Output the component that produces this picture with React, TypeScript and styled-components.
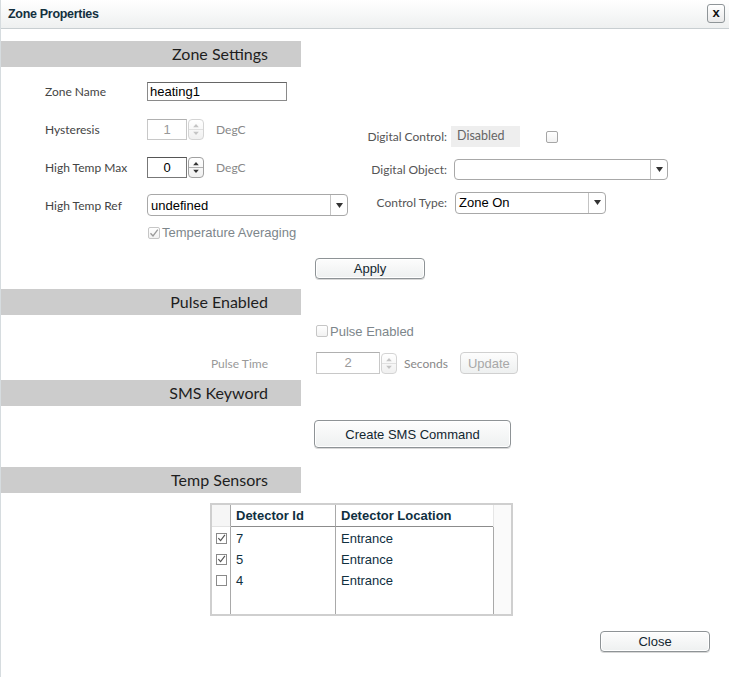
import React from 'react';
import styled, { createGlobalStyle } from "styled-components";

const GlobalStyle = createGlobalStyle`
    html, body {
        margin: 0;
        padding: 0;
        background: #ffffff;
    }
    * {
        box-sizing: border-box;
    }
`

const lato = `Lato, "Open Sans", sans-serif`
const arial = `"Liberation Sans", Arial, sans-serif`

type SensorType = {
    checked: boolean
    id: string
    location: string
}

const sensors: SensorType[] = [
    {checked: true, id: '7', location: 'Entrance'},
    {checked: true, id: '5', location: 'Entrance'},
    {checked: false, id: '4', location: 'Entrance'},
]

const CheckMark = (props: { color: string }) => (
    <svg width="10" height="10" viewBox="0 0 10 10">
        <path d="M1.5 5.2 L4 8 L8.8 1.6" fill="none" stroke={props.color} strokeWidth="1.3"/>
    </svg>
)

const Spin = (props: { disabled?: boolean }) => {
    const c = props.disabled ? '#c4c4c4' : '#333'
    return (
        <SpinBox disabled={props.disabled}>
            <svg width="100%" height="100%" viewBox="0 0 15 21" preserveAspectRatio="none">
                <path d="M4.5 8 L7.5 4.5 L10.5 8 Z" fill={c}/>
                <line x1="0" y1="10.5" x2="15" y2="10.5" stroke={props.disabled ? '#ddd' : '#aaa'} strokeWidth="1"/>
                <path d="M4.5 13 L7.5 16.5 L10.5 13 Z" fill={c}/>
            </svg>
        </SpinBox>
    )
}

const Select = (props: { width: number, height: number, value: string }) => (
    <SelectBox style={{width: props.width, height: props.height}}>
        <SelectValue>{props.value}</SelectValue>
        <SelectArrow>
            <svg width="7" height="5" viewBox="0 0 7 5">
                <path d="M0 0 L7 0 L3.5 5 Z" fill="#333"/>
            </svg>
        </SelectArrow>
    </SelectBox>
)

export default function App() {
    return (
        <>
            <GlobalStyle/>
            <Dialog>
                <TitleBar>
                    <Title>Zone Properties</Title>
                    <CloseX>x</CloseX>
                </TitleBar>

                <SectionHeader style={{marginTop: 12}}>Zone Settings</SectionHeader>
                <ZoneBody>
                    <FormColumns>
                        <LeftCol>
                            <LeftRow>
                                <Label>Zone Name</Label>
                                <TextInput>heating1</TextInput>
                            </LeftRow>
                            <LeftRow>
                                <Label>Hysteresis</Label>
                                <NumberInput disabled>1</NumberInput>
                                <Spin disabled/>
                                <Unit>DegC</Unit>
                            </LeftRow>
                            <LeftRow>
                                <Label>High Temp Max</Label>
                                <NumberInput>0</NumberInput>
                                <Spin/>
                                <Unit>DegC</Unit>
                            </LeftRow>
                            <LeftRow>
                                <Label>High Temp Ref</Label>
                                <Select width={201} height={22} value="undefined"/>
                            </LeftRow>
                            <CheckRow>
                                <CheckBox disabled><CheckMark color="#9a9a9a"/></CheckBox>
                                <CheckText disabled>Temperature Averaging</CheckText>
                            </CheckRow>
                        </LeftCol>
                        <RightCol>
                            <RightRow>
                                <RightLabel>Digital Control:</RightLabel>
                                <DisabledBox>Disabled</DisabledBox>
                                <CheckBox style={{marginLeft: 26}}/>
                            </RightRow>
                            <RightRow>
                                <RightLabel>Digital Object:</RightLabel>
                                <Spacer width={3}/>
                                <Select width={214} height={21} value=""/>
                            </RightRow>
                            <RightRow>
                                <RightLabel>Control Type:</RightLabel>
                                <Spacer width={4}/>
                                <Select width={151} height={22} value="Zone On"/>
                            </RightRow>
                        </RightCol>
                    </FormColumns>
                    <ButtonRow>
                        <Button width={110} height={21}>Apply</Button>
                    </ButtonRow>
                </ZoneBody>

                <SectionHeader>Pulse Enabled</SectionHeader>
                <PulseBody>
                    <PulseRow height={20}>
                        <span/>
                        <Inline>
                            <CheckBox disabled/>
                            <CheckText disabled>Pulse Enabled</CheckText>
                        </Inline>
                    </PulseRow>
                    <PulseRow height={24}>
                        <PulseLabel>Pulse Time</PulseLabel>
                        <Inline>
                            <NumberInput disabled wide>2</NumberInput>
                            <Spin disabled/>
                            <Unit style={{marginLeft: 7}}>Seconds</Unit>
                            <Button width={58} height={22} disabled style={{marginLeft: 12}}>Update</Button>
                        </Inline>
                    </PulseRow>
                </PulseBody>

                <SectionHeader>SMS Keyword</SectionHeader>
                <SmsBody>
                    <Button width={197} height={28}>Create SMS Command</Button>
                </SmsBody>

                <SectionHeader>Temp Sensors</SectionHeader>
                <SensorsBody>
                    <SensorTable>
                        <HeadCell first/>
                        <HeadCell>Detector Id</HeadCell>
                        <HeadCell>Detector Location</HeadCell>
                        <ScrollTrack/>
                        {sensors.map(s => (
                            <React.Fragment key={s.id}>
                                <Cell first>
                                    <TableCheck>{s.checked && <CheckMark color="#555"/>}</TableCheck>
                                </Cell>
                                <Cell>{s.id}</Cell>
                                <Cell>{s.location}</Cell>
                            </React.Fragment>
                        ))}
                        <FillerCell/>
                        <FillerCell/>
                        <FillerCell/>
                    </SensorTable>
                    <CloseRow>
                        <Button width={110} height={21}>Close</Button>
                    </CloseRow>
                </SensorsBody>
            </Dialog>
        </>
    );
}

const Dialog = styled.div`
    width: 729px;
    height: 677px;
    border-left: 1px solid #d6dcdf;
    background: #ffffff;
    overflow: hidden;
`
const TitleBar = styled.div`
    height: 29px;
    display: flex;
    align-items: center;
    justify-content: space-between;
    padding: 0 4px 0 7px;
    background: linear-gradient(#ffffff, #eef0f0);
    border-bottom: 1px solid #c8ced1;
`
const Title = styled.div`
    font-family: ${arial};
    font-weight: bold;
    font-size: 12.5px;
    color: #13303f;
    letter-spacing: -0.3px;
`
const CloseX = styled.div`
    width: 18px;
    height: 19px;
    margin-top: -2px;
    border: 1px solid #8f9598;
    border-radius: 3px;
    background: linear-gradient(#ffffff, #eaeaea);
    display: flex;
    align-items: center;
    justify-content: center;
    font-family: ${arial};
    font-weight: bold;
    font-size: 13px;
    line-height: 1;
    color: #111;
    padding-bottom: 2px;
`
const SectionHeader = styled.div`
    width: 300px;
    height: 26px;
    background: #cccccc;
    text-align: right;
    padding-right: 33px;
    font-family: ${lato};
    font-size: 16px;
    line-height: 26px;
    color: #1e1e1e;
`
const ZoneBody = styled.div`
    padding: 5px 0 10px;
`
const FormColumns = styled.div`
    display: flex;
    align-items: flex-start;
`
const LeftCol = styled.div`
    width: 359px;
    padding-left: 44px;
    display: flex;
    flex-direction: column;
`
const LeftRow = styled.div`
    height: 38px;
    display: flex;
    align-items: center;
`
const Label = styled.div`
    width: 102px;
    font-family: ${lato};
    font-size: 12px;
    color: #444;
`
const TextInput = styled.div`
    width: 140px;
    height: 19px;
    border: 1px solid #8a8a8a;
    border-top-color: #666;
    padding-left: 2px;
    font-family: ${arial};
    font-size: 13px;
    line-height: 17px;
    color: #000;
`
const NumberInput = styled.div<{ disabled?: boolean, wide?: boolean }>`
    width: ${props => props.wide ? 64 : 40}px;
    height: ${props => props.wide ? 22 : 21}px;
    border: 1px solid ${props => props.disabled ? '#c8c8c8' : '#777'};
    border-top-color: ${props => props.disabled ? '#b0b0b0' : '#555'};
    text-align: center;
    font-family: ${arial};
    font-size: 13px;
    line-height: ${props => props.wide ? 20 : 19}px;
    color: ${props => props.disabled ? '#999' : '#000'};
    margin-right: 1px;
`
const SpinBox = styled.div<{ disabled?: boolean }>`
    width: 16px;
    height: 21px;
    border: 1px solid ${props => props.disabled ? '#d4d4d4' : '#a0a0a0'};
    border-radius: 4px;
    background: linear-gradient(#ffffff, #f0f0f0);
    overflow: hidden;
    flex-shrink: 0;
`
const Unit = styled.div`
    margin-left: 12px;
    font-family: ${lato};
    font-size: 12px;
    color: #888;
`
const SelectBox = styled.div`
    display: flex;
    border: 1px solid #a8a8a8;
    border-radius: 4px;
    background: #ffffff;
    overflow: hidden;
`
const SelectValue = styled.div`
    flex: 1;
    padding-left: 3px;
    font-family: ${arial};
    font-size: 13px;
    display: flex;
    align-items: center;
    color: #000;
`
const SelectArrow = styled.div`
    width: 17px;
    border-left: 1px solid #c4c4c4;
    display: flex;
    align-items: center;
    justify-content: center;
`
const CheckRow = styled.div`
    height: 17px;
    display: flex;
    align-items: center;
    padding-left: 103px;
`
const CheckBox = styled.div<{ disabled?: boolean }>`
    width: 12px;
    height: 12px;
    border: 1px solid ${props => props.disabled ? '#c6c6c6' : '#a6a6a6'};
    border-radius: 2px;
    background: linear-gradient(#ffffff, #f2f2f2);
    display: flex;
    align-items: center;
    justify-content: center;
    flex-shrink: 0;
`
const CheckText = styled.div<{ disabled?: boolean }>`
    margin-left: 2px;
    font-family: ${arial};
    font-size: 13px;
    color: ${props => props.disabled ? '#7d868b' : '#222'};
`
const RightCol = styled.div`
    margin-top: 48px;
    display: flex;
    flex-direction: column;
`
const RightRow = styled.div`
    height: 33px;
    display: flex;
    align-items: center;
`
const RightLabel = styled.div`
    width: 87px;
    text-align: right;
    font-family: ${lato};
    font-size: 12px;
    color: #555;
    margin-right: 4px;
`
const Spacer = styled.div<{ width: number }>`
    width: ${props => props.width}px;
`
const DisabledBox = styled.div`
    width: 69px;
    height: 21px;
    background: #eeeeee;
    padding-left: 6px;
    font-family: ${lato};
    font-size: 12.5px;
    line-height: 20px;
    color: #666;
`
const ButtonRow = styled.div`
    margin-top: 17px;
    padding-left: 314px;
`
const Button = styled.div<{ width: number, height: number, disabled?: boolean }>`
    width: ${props => props.width}px;
    height: ${props => props.height}px;
    border: 1px solid ${props => props.disabled ? '#d0d0d0' : '#8e9396'};
    border-radius: 4px;
    background: linear-gradient(#fdfdfd, #eef0f0);
    box-shadow: ${props => props.disabled ? 'none' : 'inset 0 0 0 1px #ffffff, 0 1px 0 #d8d8d8'};
    display: flex;
    align-items: center;
    justify-content: center;
    font-family: ${arial};
    font-size: 13px;
    color: ${props => props.disabled ? '#a8a8a8' : '#12262f'};
`
const PulseBody = styled.div`
    padding: 6px 0 5px;
    display: flex;
    flex-direction: column;
    gap: 10px;
`
const PulseRow = styled.div<{ height: number }>`
    height: ${props => props.height}px;
    display: grid;
    grid-template-columns: 267px 1fr;
    column-gap: 48px;
    align-items: center;
`
const PulseLabel = styled.div`
    text-align: right;
    font-family: ${lato};
    font-size: 12px;
    color: #999;
`
const Inline = styled.div`
    display: flex;
    align-items: center;
`
const SmsBody = styled.div`
    padding: 14px 0 19px 313px;
`
const SensorsBody = styled.div`
    padding-top: 10px;
`
const SensorTable = styled.div`
    margin-left: 209px;
    width: 303px;
    height: 113px;
    border: 2px solid #cfcfcf;
    display: grid;
    grid-template-columns: 19px 105px 158px 1fr;
    grid-template-rows: 22px 21px 21px 21px 1fr;
    font-family: ${arial};
    font-size: 13px;
    color: #10303f;
`
const HeadCell = styled.div<{ first?: boolean }>`
    border-right: 1px solid #a9a9a9;
    border-bottom: 1px solid ${props => props.first ? '#e2e2e2' : '#8c8c8c'};
    background: ${props => props.first ? '#f6f6f6' : '#ffffff'};
    font-weight: bold;
    padding-left: 5px;
    display: flex;
    align-items: center;
`
const Cell = styled.div<{ first?: boolean }>`
    border-right: 1px solid #a9a9a9;
    padding-left: ${props => props.first ? 4 : 5}px;
    display: flex;
    align-items: center;
    padding-top: 1px;
`
const FillerCell = styled.div`
    border-right: 1px solid #a9a9a9;
`
const ScrollTrack = styled.div`
    grid-column: 4;
    grid-row: 1 / -1;
    background: #fafafa;
    border-left: 1px solid #e6e6e6;
    margin-left: -1px;
`
const TableCheck = styled.div`
    width: 11px;
    height: 11px;
    border: 1px solid #8a8a8a;
    background: #ffffff;
    display: flex;
    align-items: center;
    justify-content: center;
`
const CloseRow = styled.div`
    margin-top: 15px;
    display: flex;
    justify-content: flex-end;
    padding-right: 19px;
`
